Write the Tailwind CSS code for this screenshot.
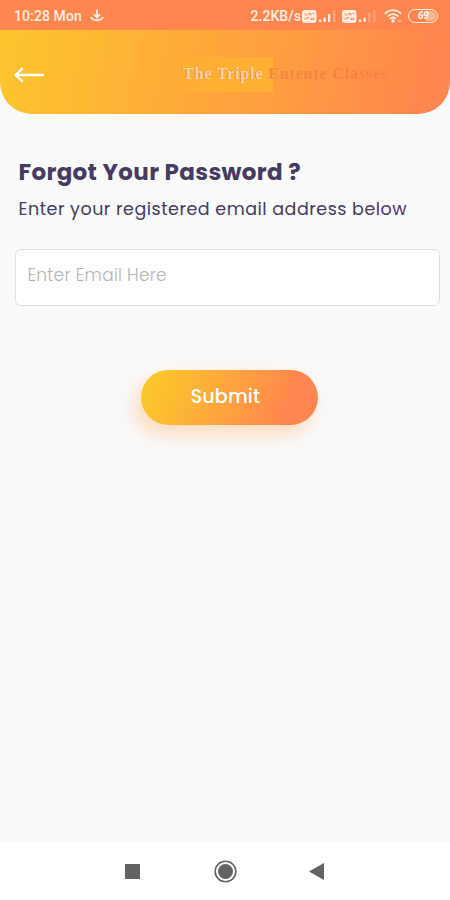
<!DOCTYPE html>
<html lang="en">
<head>
  <meta charset="UTF-8">
  <meta name="viewport" content="width=device-width, initial-scale=1">
  <title>Forgot Password</title>
  <script src="https://cdn.jsdelivr.net/npm/@tailwindcss/browser@4"></script>
</head>
<body class="bg-[#fafafa] font-['Poppins','Inter',sans-serif] overflow-hidden">
<div class="flex flex-col h-screen w-full">

  <!-- Status bar -->
  <div class="h-[30px] shrink-0 bg-[#ff864e] flex items-center pt-0.5 pl-[14px] pr-[12px] text-white/85 font-['Roboto',sans-serif]">
    <span class="text-[14px] font-medium tracking-[0.1px] whitespace-nowrap">10:28 Mon</span>
    <svg class="ml-[8px] w-[14px] h-[14px]" viewBox="0 0 14 14" fill="none" stroke="currentColor" stroke-width="1.8">
      <path d="M7 .5v8M4 5.500l3 3 3-3M1 8c1.500 4.300 10.500 4.300 12 0"/>
    </svg>
    <span class="ml-auto text-[14px] font-medium tracking-[0.05px] whitespace-nowrap">2.2KB/s</span>
    <svg class="ml-[1px] w-[15px] h-[13px]" viewBox="0 0 15 13">
      <rect width="14.500" height="13" rx="3" fill="currentColor"/>
      <path d="M2.500 3.500l1.500 2 1.500-2M7 5.500v-2h2v2M10.500 3.500h2M3 9.500v-2M5 9.500v-2h2M9 7.500v2h2.500v-2" fill="none" stroke="#ff864e"/>
    </svg>
    <svg class="ml-[2px] w-[18px] h-[12px]" viewBox="0 0 18 12" fill="currentColor">
      <path d="M0 9.500h2.200v2.500H0zM4.500 7.500h2.200v4.500H4.500zM9 4h2.200v8H9z"/>
      <path d="M14 0h2.500v12H14z" opacity=".3"/>
    </svg>
    <svg class="ml-[5px] w-[15px] h-[13px]" viewBox="0 0 15 13">
      <rect width="14.500" height="13" rx="3" fill="currentColor"/>
      <path d="M2.500 3.500l1.500 2 1.500-2M7 5.500v-2h2v2M10.500 3.500h2M3 9.500v-2M5 9.500v-2h2M9 7.500v2h2.500v-2" fill="none" stroke="#ff864e"/>
    </svg>
    <svg class="ml-[2px] w-[18px] h-[12px]" viewBox="0 0 18 12" fill="currentColor">
      <path d="M0 9.500h2.200v2.500H0zM4.500 7.500h2.200v4.500H4.500z"/>
      <path d="M9 3h2.500v9H9zM14 0h2.500v12H14z" opacity=".25"/>
    </svg>
    <svg class="ml-[7px] w-[18px] h-[14px]" viewBox="0 0 18 14" fill="none" stroke="currentColor" stroke-width="1.700">
      <path d="M.8 4.800c4.800-4.800 11.600-4.800 16.400 0M3.500 7.500c3.200-3.200 7.800-3.200 11 0M6 10c1.800-1.800 4.200-1.800 6 0"/>
      <circle cx="9" cy="12" r=".8" fill="currentColor"/>
      <path d="M14 12h3" stroke-width="1.500" opacity=".7"/>
    </svg>
    <div class="ml-[6px] w-[30px] h-[14px] rounded-full border-[1.5px] border-white/85 p-[1px] flex items-center">
      <div class="w-full h-full rounded-full bg-linear-[90deg,rgba(255,255,255,0)_62%,rgba(255,255,255,0.4)_62%] flex items-center justify-center text-[10.5px] leading-none font-bold italic tracking-[-0.5px] text-white/90">69</div>
    </div>
  </div>

  <!-- Header -->
  <div class="shrink-0 h-[84px] rounded-b-[32px] bg-linear-[102deg,#fcc62d_0%,#ffa73b_46%,#ff864e_96%] flex items-center pl-[14px]">
    <svg class="w-[31px] h-[16px] mt-[5px] shrink-0" viewBox="0 0 31 16" fill="none" stroke="white" stroke-width="2.400" stroke-linecap="round" stroke-linejoin="round">
      <path d="M1.500 8H29M8 1.800L1.500 8L8 14.200"/>
    </svg>
    <div class="ml-[129px] mt-[4px] h-[35px] pl-[9px] flex items-center bg-[linear-gradient(90deg,#ffb0334d,#ffb033_40%)] bg-[length:99px_100%] bg-no-repeat font-['Liberation_Serif',serif] font-bold text-[16px] tracking-[0.85px] whitespace-pre">
      <span class="text-[#ffd2a2] [text-shadow:-1px_0_0_#ec8440]">The Triple </span><span class="text-[#f0883d]">Entente </span><span class="bg-linear-[90deg,#f0803f,#fb8149] bg-clip-text text-transparent">Classes</span>
    </div>
  </div>

  <!-- Form -->
  <main class="grow flex flex-col pt-[42px] pl-[15px] pr-[10px]">
    <h1 class="pl-[3.5px] h-[32px] leading-[32px] text-[23px] font-bold tracking-[0.35px] text-[#463b61] whitespace-nowrap">Forgot Your Password ?</h1>
    <p class="pl-[3.5px] mt-[7px] h-[28px] leading-[28px] text-[17.5px] tracking-[0.5px] text-[#463b61] whitespace-nowrap">Enter your registered email address below</p>
    <input type="email" placeholder="Enter Email Here"
           class="mt-[26px] h-[57px] w-full rounded-md border border-[#e0e0e0] bg-white pl-[11.5px] pb-[6px] text-[17px] font-light tracking-[0.25px] placeholder:text-[#b4b4b4]">
    <button class="mt-[64px] ml-[126px] w-[177px] h-[55px] pb-px pr-2 rounded-full bg-linear-[112deg,#fac52c_10%,#ffa140_52%,#ff864e_82%] shadow-[-6px_9px_20px_rgba(255,155,65,0.34)] text-white text-[19px] font-medium tracking-[0.2px]">Submit</button>
  </main>

  <!-- Navigation bar -->
  <nav class="shrink-0 h-[58px] bg-white flex items-center pl-[125px] text-[#626262]">
    <svg class="w-[15px] h-[15px]" viewBox="0 0 15 15"><rect width="15" height="15" fill="currentColor"/></svg>
    <svg class="ml-[74px] w-[23px] h-[23px]" viewBox="0 0 23 23">
      <circle cx="11.500" cy="11.500" r="10.300" fill="none" stroke="currentColor" stroke-width="1.600"/>
      <circle cx="11.500" cy="11.500" r="7.500" fill="currentColor"/>
    </svg>
    <svg class="ml-[72px] w-[15px] h-[17px]" viewBox="0 0 15 17"><path d="M0 8.500L15 0v17z" fill="currentColor"/></svg>
  </nav>
</div>
</body>
</html>
